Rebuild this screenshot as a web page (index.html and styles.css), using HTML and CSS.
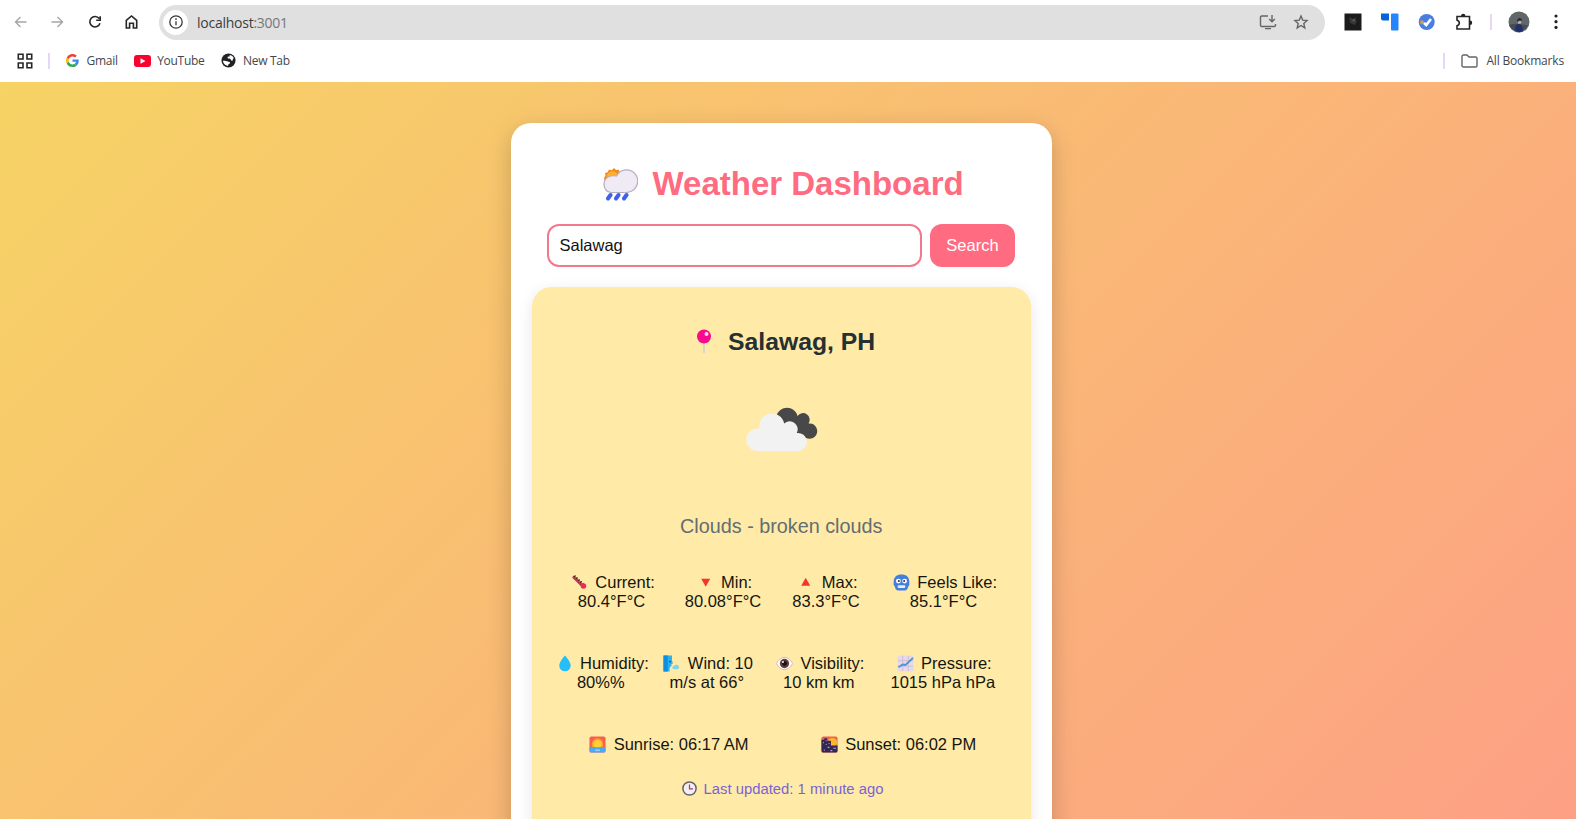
FILE: index.html
```html
<!DOCTYPE html>
<html lang="en">
<head>
<meta charset="utf-8">
<title>Weather Dashboard</title>
<link rel="stylesheet" href="styles.css">
</head>
<body>
<header class="browser">
  <div class="toolbar">
    <svg class="nav-icon" viewBox="0 0 16 16"><path class="dim" d="M13.500 8H2.500M7.500 3 2.500 8 7.500 13"/></svg>
    <svg class="nav-icon" viewBox="0 0 16 16"><path class="dim" d="M1.500 8h11M7.500 3l5 5-5 5"/></svg>
    <svg class="nav-icon" viewBox="0 0 16 16"><path class="ink" d="M12.200 4.600A5.200 5.200 0 1 0 13 9.300M13.200 2.200v4H9.200"/></svg>
    <svg class="nav-icon" viewBox="0 0 16 16"><path class="ink" d="M2.300 14V6.300L7.500 2l5.200 4.300V14H9.400V9.200H5.600V14z"/></svg>
    <div class="omnibox">
      <span class="site-info"><svg width="16" height="16" viewBox="0 0 16 16"><circle class="thin" cx="8" cy="8" r="6.200"/><path class="thin" d="M8 7.300v4M8 4.300v1.600"/></svg></span>
      <span class="url">localhost<span class="port">:3001</span></span>
      <svg class="install" viewBox="0 0 18 18"><path class="gray" d="M9 3H2.800Q1.500 3 1.500 4.300v7.900q0 1.300 1.300 1.300h12.400q1.300 0 1.300-1.300V11M6 15.600h6M13 2v6.500M10.200 6l2.800 2.800L15.800 6"/></svg>
      <svg class="star" viewBox="0 0 16 16"><path class="gray" d="m8 2 1.700 4.100 4.400.4-3.300 3 1 4.400L8 11.500l-3.800 2.400 1-4.400-3.300-3 4.400-.4z"/></svg>
    </div>
    <div class="extensions">
      <svg width="18" height="18" viewBox="0 0 18 18"><rect x=".5" y=".5" width="17" height="17" fill="#1b1b1b"/><path d="m5 4 8 4-2 4-5-2z" fill="#373737"/><path d="m8 7 4-2-2 4z" fill="#5e5e5e"/></svg>
      <svg width="18" height="18" viewBox="0 0 18 18"><path d="M0 .5h8v7H2Q0 7.500 0 5.500z" fill="#0763d9"/><rect x="10" y=".5" width="7.500" height="17" rx="1" fill="#2684ff"/></svg>
      <svg width="18" height="18" viewBox="0 0 18 18"><circle cx="8.700" cy="9" r="8" fill="#4a7de0"/><circle cx="4" cy="9.300" r="2" fill="#c8a052"/><path d="m6 10 2.200 2L13 6" stroke="#fff" stroke-width="2.600" fill="none"/></svg>
      <svg width="18" height="18" viewBox="0 0 18 18"><path class="ink" d="M2 3.500h12.500v12.500H2v-3.300q2.300-.6 2.300-2.800T2 7.200z"/><path d="M6 3a2.200 2.200 0 0 1 4.400 0zM15 7.500a2.200 2.200 0 0 1 0 4.400z" fill="#222"/></svg>
    </div>
    <span class="divider"></span>
    <svg class="avatar" viewBox="0 0 22 22"><circle cx="11" cy="11" r="10.500" fill="#60676a"/><path d="M1 14Q6 12 11 13t9 1a10.500 10.500 0 0 1-19 0z" fill="#444c55"/><path d="M7 19q0-6 4-6t4 7q-5 3-8-1z" fill="#20306a"/><circle cx="11.500" cy="11" r="2" fill="#c8a392"/><path d="M9 11q0-4 2.500-4t2.500 3l-2-.5z" fill="#2b2a30"/></svg>
    <svg class="menu" viewBox="0 0 6 18"><circle cx="3" cy="3" r="1.600"/><circle cx="3" cy="8.700" r="1.600"/><circle cx="3" cy="14.400" r="1.600"/></svg>
  </div>
  <div class="bookmarks">
    <svg class="apps" viewBox="0 0 16 16"><path class="ink" d="M1.300 1.300H6V6H1.300zM10 1.300h4.700V6H10zM1.300 10H6v4.700H1.300zM10 10h4.700v4.700H10z"/></svg>
    <span class="divider first"></span>
    <span class="bookmark gmail"><svg width="13" height="13" viewBox="0 0 48 48"><path fill="#ea4335" d="M24 9.500c3.500 0 6.700 1.200 9.200 3.600l6.900-6.900A24 24 0 0 0 2.600 13.200l8 6.200C12.400 13.700 17.700 9.500 24 9.500z"/><path fill="#4285f4" d="M47 24.600c0-1.600-.2-3.100-.4-4.600H24v9h12.900a11 11 0 0 1-4.700 7.200l7.700 6C44.400 38 47 32 47 24.600z"/><path fill="#fbbc05" d="M10.500 28.600a14.500 14.500 0 0 1 0-9.200l-8-6.200a24 24 0 0 0 0 21.600z"/><path fill="#34a853" d="M24 48c6.500 0 11.900-2.100 15.900-5.800l-7.700-6c-2.200 1.500-4.900 2.300-8.200 2.300-6.300 0-11.600-4.200-13.500-9.900l-8 6.200A24 24 0 0 0 24 48z"/></svg>Gmail</span>
    <span class="bookmark youtube"><svg width="17" height="12" viewBox="0 0 17 12"><rect width="17" height="12" rx="3" fill="#f8022e"/><path d="m6.500 3.300 5 2.700-5 2.700z" fill="#fff"/></svg>YouTube</span>
    <span class="bookmark newtab"><svg width="15" height="15" viewBox="0 0 16 16"><circle cx="8" cy="8" r="7.500" fill="#202124"/><path d="M9.500 2q3 .2 4.200 3.400-1.500.8-1.200 2.600-1.500.5-2-.8-.4-1.300-2-1.200-2.300-.3-1.400-1.900Q9.600 4 9.500 2zM2 8.300q3-.3 4.500.5 1.600.8 3 .7.700 1.800-1.200 2.300-.8.500-.8 2Q2.700 13 2 8.300z" fill="#fff"/></svg>New Tab</span>
    <span class="bookmark all"><span class="divider"></span><svg width="17" height="14" viewBox="0 0 17 14"><path class="gray" d="M1 11.500v-9Q1 1 2.500 1H6l2 2h6.500Q16 3 16 4.500v7q0 1.500-1.500 1.500h-12Q1 13 1 11.500z"/></svg>All Bookmarks</span>
  </div>
</header>

<main class="page">
  <section class="dashboard">
    <h1 class="title">
      <svg class="title-icon" viewBox="0 0 36 34"><path d="m2 11 1.500-2.500L3 6l2.700-.8L7 2.500l2.700.7L12 1l2 2 3-.2.500 3L20 8l-8 9H3z" fill="#f58a1f"/><circle cx="10.500" cy="10" r="5.800" fill="#ffb02e"/><path d="M9 25.500A8.300 8.300 0 0 1 7.500 9.500Q10 8.300 14.500 9A11.200 11.200 0 1 1 27 25q-1 .5-3 .5z" fill="#f0eaf5" stroke="#b5aebf" stroke-width="1.200"/><path d="m8.500 28-2.500 3.500M16.500 28 14 31.500M24.500 28 22 31.500" stroke="#3f5fee" stroke-width="4" stroke-linecap="round"/></svg>
      <span>Weather Dashboard</span>
    </h1>
    <form class="search">
      <input class="search-input" type="text" value="Salawag" aria-label="City">
      <button class="search-button" type="button">Search</button>
    </form>
    <article class="weather">
      <h2 class="city">
        <svg class="pin" viewBox="0 0 16 26"><path d="M8 12v12" stroke="#d3cfc8" stroke-width="1.500"/><circle cx="8" cy="7.500" r="7" fill="#f70a8d"/><circle cx="10.500" cy="5" r="2" fill="#ffd0e9"/></svg>
        <span>Salawag, PH</span>
      </h2>
      <svg class="condition" viewBox="0 0 72 46"><path fill="#484848" d="M30.500 10A10.800 10.800 0 0 1 51.500 10 6.600 6.600 0 0 1 62.500 17.500 7.700 7.700 0 1 1 60 32L34 28z"/><path fill="#f2f2f2" d="M11.500 45A11 11 0 0 1 11.500 22.500h2A12.600 12.600 0 1 1 38.200 17.500 8 8 0 0 1 50.800 27 9 9 0 0 1 53 45z"/></svg>
      <p class="summary">Clouds - broken clouds</p>
      <div class="row temps">
        <p class="item"><svg class="emoji" viewBox="0 0 18 18"><path d="m3 3.500 9 9" stroke="#c93450" stroke-width="3" stroke-linecap="round"/><path d="m3.500 1.800 9.500 9" stroke="#4c1a22" stroke-dasharray="1.500 1.500" stroke-width="2"/><circle cx="13.200" cy="12.800" r="2.900" fill="#f02a50"/></svg> Current:<br>80.4°F°C</p>
        <p class="item"><svg class="emoji" viewBox="0 0 18 18"><path d="M4.500 5h9.500L9.200 13.500z" fill="#f5342e"/></svg> Min:<br>80.08°F°C</p>
        <p class="item"><svg class="emoji" viewBox="0 0 18 18"><path d="M4.500 12.500H14L9.200 4z" fill="#f5342e"/></svg> Max:<br>83.3°F°C</p>
        <p class="item"><svg class="emoji" viewBox="0 0 18 18"><path d="M.7 8.500C.7 3 4 .5 9 .5s8.300 2.500 8.300 8q.7 3-1.300 5-.5 3.500-3 4H5q-2.500-.5-3-4-2-2-1.300-5z" fill="#427fe0"/><circle cx="5.700" cy="7.500" r="2.600" fill="#fff"/><circle cx="12.300" cy="7.500" r="2.600" fill="#fff"/><circle cx="6.200" cy="7.500" r="1.100" fill="#402a32"/><circle cx="11.800" cy="7.500" r="1.100" fill="#402a32"/><rect x="5" y="12" width="8" height="2.800" rx="1" fill="#e8eefb"/></svg> Feels Like:<br>85.1°F°C</p>
      </div>
      <div class="row details">
        <p class="item"><svg class="emoji" viewBox="0 0 18 18"><path d="M9.500.5Q15.500 7 15.500 11.300a6 6 0 0 1-12 0Q3.500 7 9.500.5z" fill="#26bdf8"/></svg> Humidity:<br>80%%</p>
        <p class="item"><svg class="emoji" viewBox="0 0 18 18"><path d="M.5.500h9v5l1 3.500-1.500.5v2l-2 2V17.500H.5z" fill="#2cb0ef"/><path d="M.5.500H5v17H.5z" fill="#0b8fe0"/><circle cx="7.500" cy="7" r="1" fill="#174d8a"/><path d="M10 13.500a2 2 0 0 1 2-2.200 2.800 2.800 0 0 1 5 1.700q0 2-2 2h-3.500q-1.500 0-1.500-1.500z" fill="#7fd4ee"/></svg> Wind: 10<br>m/s at 66°</p>
        <p class="item"><svg class="emoji" viewBox="0 0 18 18"><path d="M.3 9Q4.500 2.500 9 2.500T17.700 9Q13.500 15.500 9 15.500T.3 9z" fill="#fff" stroke="#b9aaae" stroke-width=".8"/><circle cx="9" cy="9" r="4.900" fill="#633b37"/><circle cx="9" cy="9" r="2.600" fill="#1e1016"/><circle cx="7.400" cy="7.400" r="1" fill="#fff"/></svg> Visibility:<br>10 km km</p>
        <p class="item"><svg class="emoji" viewBox="0 0 18 18"><rect x=".5" y=".5" width="17" height="17" rx="1.500" fill="#e8d9e4"/><path d="M6 1v16M12 1v16M1 6h16M1 12h16" stroke="#cdbddd" stroke-width="1"/><path d="m1.500 13 4.500-3 3 .5 8-7.500" stroke="#4b96d2" stroke-width="2" fill="none"/></svg> Pressure:<br>1015 hPa hPa</p>
      </div>
      <div class="row sun">
        <p class="item"><svg class="emoji" viewBox="0 0 18 18"><rect x=".5" y=".5" width="17" height="17" rx="2" fill="#f9604c"/><path d="M3 12V8.500a6 6 0 0 1 12 0V12z" fill="#ff9c32"/><circle cx="9" cy="8.500" r="4.300" fill="#ffd02f"/><path d="M.5 12h17v3.500q0 2-2 2h-13q-2 0-2-2z" fill="#48a9f5"/><path d="M6.500 15h5" stroke="#c8ecff"/></svg> Sunrise: 06:17 AM</p>
        <p class="item"><svg class="emoji" viewBox="0 0 18 18"><rect x=".5" y=".5" width="17" height="17" rx="2" fill="#f0604c"/><circle cx="12" cy="7" r="5" fill="#ffb62e"/><path d="M.5 4h3V2.500h3V5h4v5h7v5.500q0 2-2 2h-13q-2 0-2-2z" fill="#352652"/><path d="M2 7h1M5 5h1M5 9h1M8 8h1M13 13h3M7 12h2M3 15h1M10 15.500h2" stroke="#b9a0d6" stroke-width="1.200"/></svg> Sunset: 06:02 PM</p>
      </div>
      <p class="updated"><svg class="clock" viewBox="0 0 16 16"><circle cx="7.500" cy="7.500" r="6.600" fill="#f5edf3" stroke="#65626a" stroke-width="1.500"/><path d="M7.500 3.500v4.300H11" stroke="#8a4b73" stroke-width="1.200" fill="none"/></svg><span>Last updated: 1 minute ago</span></p>
    </article>
  </section>
</main>
</body>
</html>
```

FILE: styles.css
```css
* { box-sizing: border-box; }
html, body { height: 100%; }
body {
  margin: 0;
  display: flex;
  flex-direction: column;
  overflow: hidden;
  font-family: "Liberation Sans", Arial, sans-serif;
}
svg { flex: none; display: block; }

/* Browser chrome */
.browser {
  flex: none;
  height: 81.500px;
  background: #fff;
  font-family: "Open Sans", "Noto Sans", sans-serif;
  color: #45474a;
}
.dim, .ink, .gray, .thin { fill: none; }
.dim { stroke: #a6a6a6; stroke-width: 1.400; }
.ink { stroke: #262626; stroke-width: 1.600; }
.gray { stroke: #666; stroke-width: 1.400; }
.thin { stroke: #383838; stroke-width: 1.300; }
.toolbar {
  display: flex;
  align-items: center;
  height: 44px;
  padding-left: 13px;
}
.nav-icon { width: 16px; height: 16px; margin-right: 21px; }
.omnibox {
  display: flex;
  align-items: center;
  width: 1166px;
  height: 35px;
  margin-left: -2px;
  padding: 0 16px 0 4px;
  border-radius: 18px;
  background: #e0e0e0;
}
.site-info {
  display: grid;
  place-items: center;
  width: 25px;
  height: 25px;
  border-radius: 50%;
  background: #fff;
}
.url { flex: 1; margin-left: 9px; font-size: 14px; letter-spacing: -0.25px; color: #3c3e40; }
.port { color: #757779; }
.install { width: 18px; height: 18px; margin-right: 16px; }
.star { width: 16px; height: 16px; }
.extensions { display: flex; gap: 19px; margin-left: 19px; }
.divider { width: 2px; height: 16px; background: #e8d5fa; }
.toolbar .divider { margin-left: 17px; }
.avatar { width: 22px; height: 22px; margin-left: 16px; }
.menu { width: 6px; height: 18px; margin-left: 23px; fill: #222; }
.bookmarks {
  display: flex;
  align-items: center;
  height: 33px;
  padding: 0 12px 0 17px;
  font-size: 12px;
  letter-spacing: -0.28px;
}
.apps { width: 16px; height: 16px; }
.divider.first { margin-left: 15px; }
.bookmark { display: flex; align-items: center; gap: 8px; }
.gmail { margin-left: 16px; gap: 7.500px; }
.youtube { margin-left: 16.500px; gap: 6px; }
.newtab { margin-left: 16.500px; gap: 7px; letter-spacing: -0.3px; }
.all { margin-left: auto; letter-spacing: -0.18px; }
.all .divider { margin-right: 8px; }

/* Page */
.page {
  flex: 1;
  display: flex;
  justify-content: center;
  min-height: 0;
  padding: 41px 13px 0 0;
  overflow: hidden;
  background: linear-gradient(135deg, #f6d365 0%, #fda085 100%);
}
.dashboard {
  width: 541px;
  height: 900px;
  padding: 40px 20.500px;
  border-radius: 20px;
  background: #fff;
  box-shadow: 0 8px 25px rgba(0, 0, 0, 0.2);
}
.title {
  display: flex;
  align-items: center;
  height: 43px;
  margin: 0;
  padding-left: 70.500px;
  font-size: 33px;
  color: #ff6b81;
}
.title-icon { width: 36px; height: 34px; margin-right: 14.500px; }
.search {
  display: flex;
  gap: 8px;
  height: 43px;
  margin: 18px 16px 20.500px 15.500px;
}
.search-input, .search-button {
  font: 16.500px "Liberation Sans", Arial, sans-serif;
  border-radius: 12px;
}
.search-input {
  width: 375px;
  padding: 0 10.500px;
  border: 2px solid #f0798d;
  outline: 0;
  background: #fff;
  color: #111;
}
.search-button {
  width: 85px;
  padding: 0;
  border: 0;
  background: #ff6b81;
  color: #fff;
}
.weather {
  width: 499.500px;
  height: 700px;
  padding-top: 38px;
  border-radius: 20px;
  background: #ffeaa7;
  box-shadow: 0 4px 15px rgba(0, 0, 0, 0.1);
}
.city {
  display: flex;
  align-items: center;
  height: 34px;
  margin: 0;
  padding-left: 164px;
  font-size: 24.750px;
  color: #253033;
}
.pin { width: 16px; height: 26px; margin-right: 16.500px; }
.condition { width: 72px; height: 46px; margin: 47px 0 0 214.500px; }
.summary {
  margin: 62px 0 0;
  font-size: 19.800px;
  line-height: 24px;
  text-align: center;
  color: #636e72;
}
.row { display: grid; font-size: 16.500px; line-height: 19px; color: #151510; }
.item { margin: 0; text-align: center; white-space: nowrap; }
.emoji {
  display: inline-block;
  width: 17px;
  height: 17px;
  margin: 0 2.800px;
  vertical-align: -3px;
}
.temps { grid-template-columns: 103px 120px 86px 149px; margin: 35px 0 0 28.500px; }
.details { grid-template-columns: 102px 110px 114px 134px; margin: 43px 0 0 18.300px; }
.sun { grid-template-columns: 231.500px auto; margin: 43px 0 0 55px; }
.sun .item { text-align: left; }
.updated {
  display: flex;
  align-items: center;
  height: 18px;
  margin: 26px 0 0 150px;
  font-size: 14.850px;
  color: #7b62d9;
}
.clock { width: 16px; height: 16px; margin-right: 6px; }
```
